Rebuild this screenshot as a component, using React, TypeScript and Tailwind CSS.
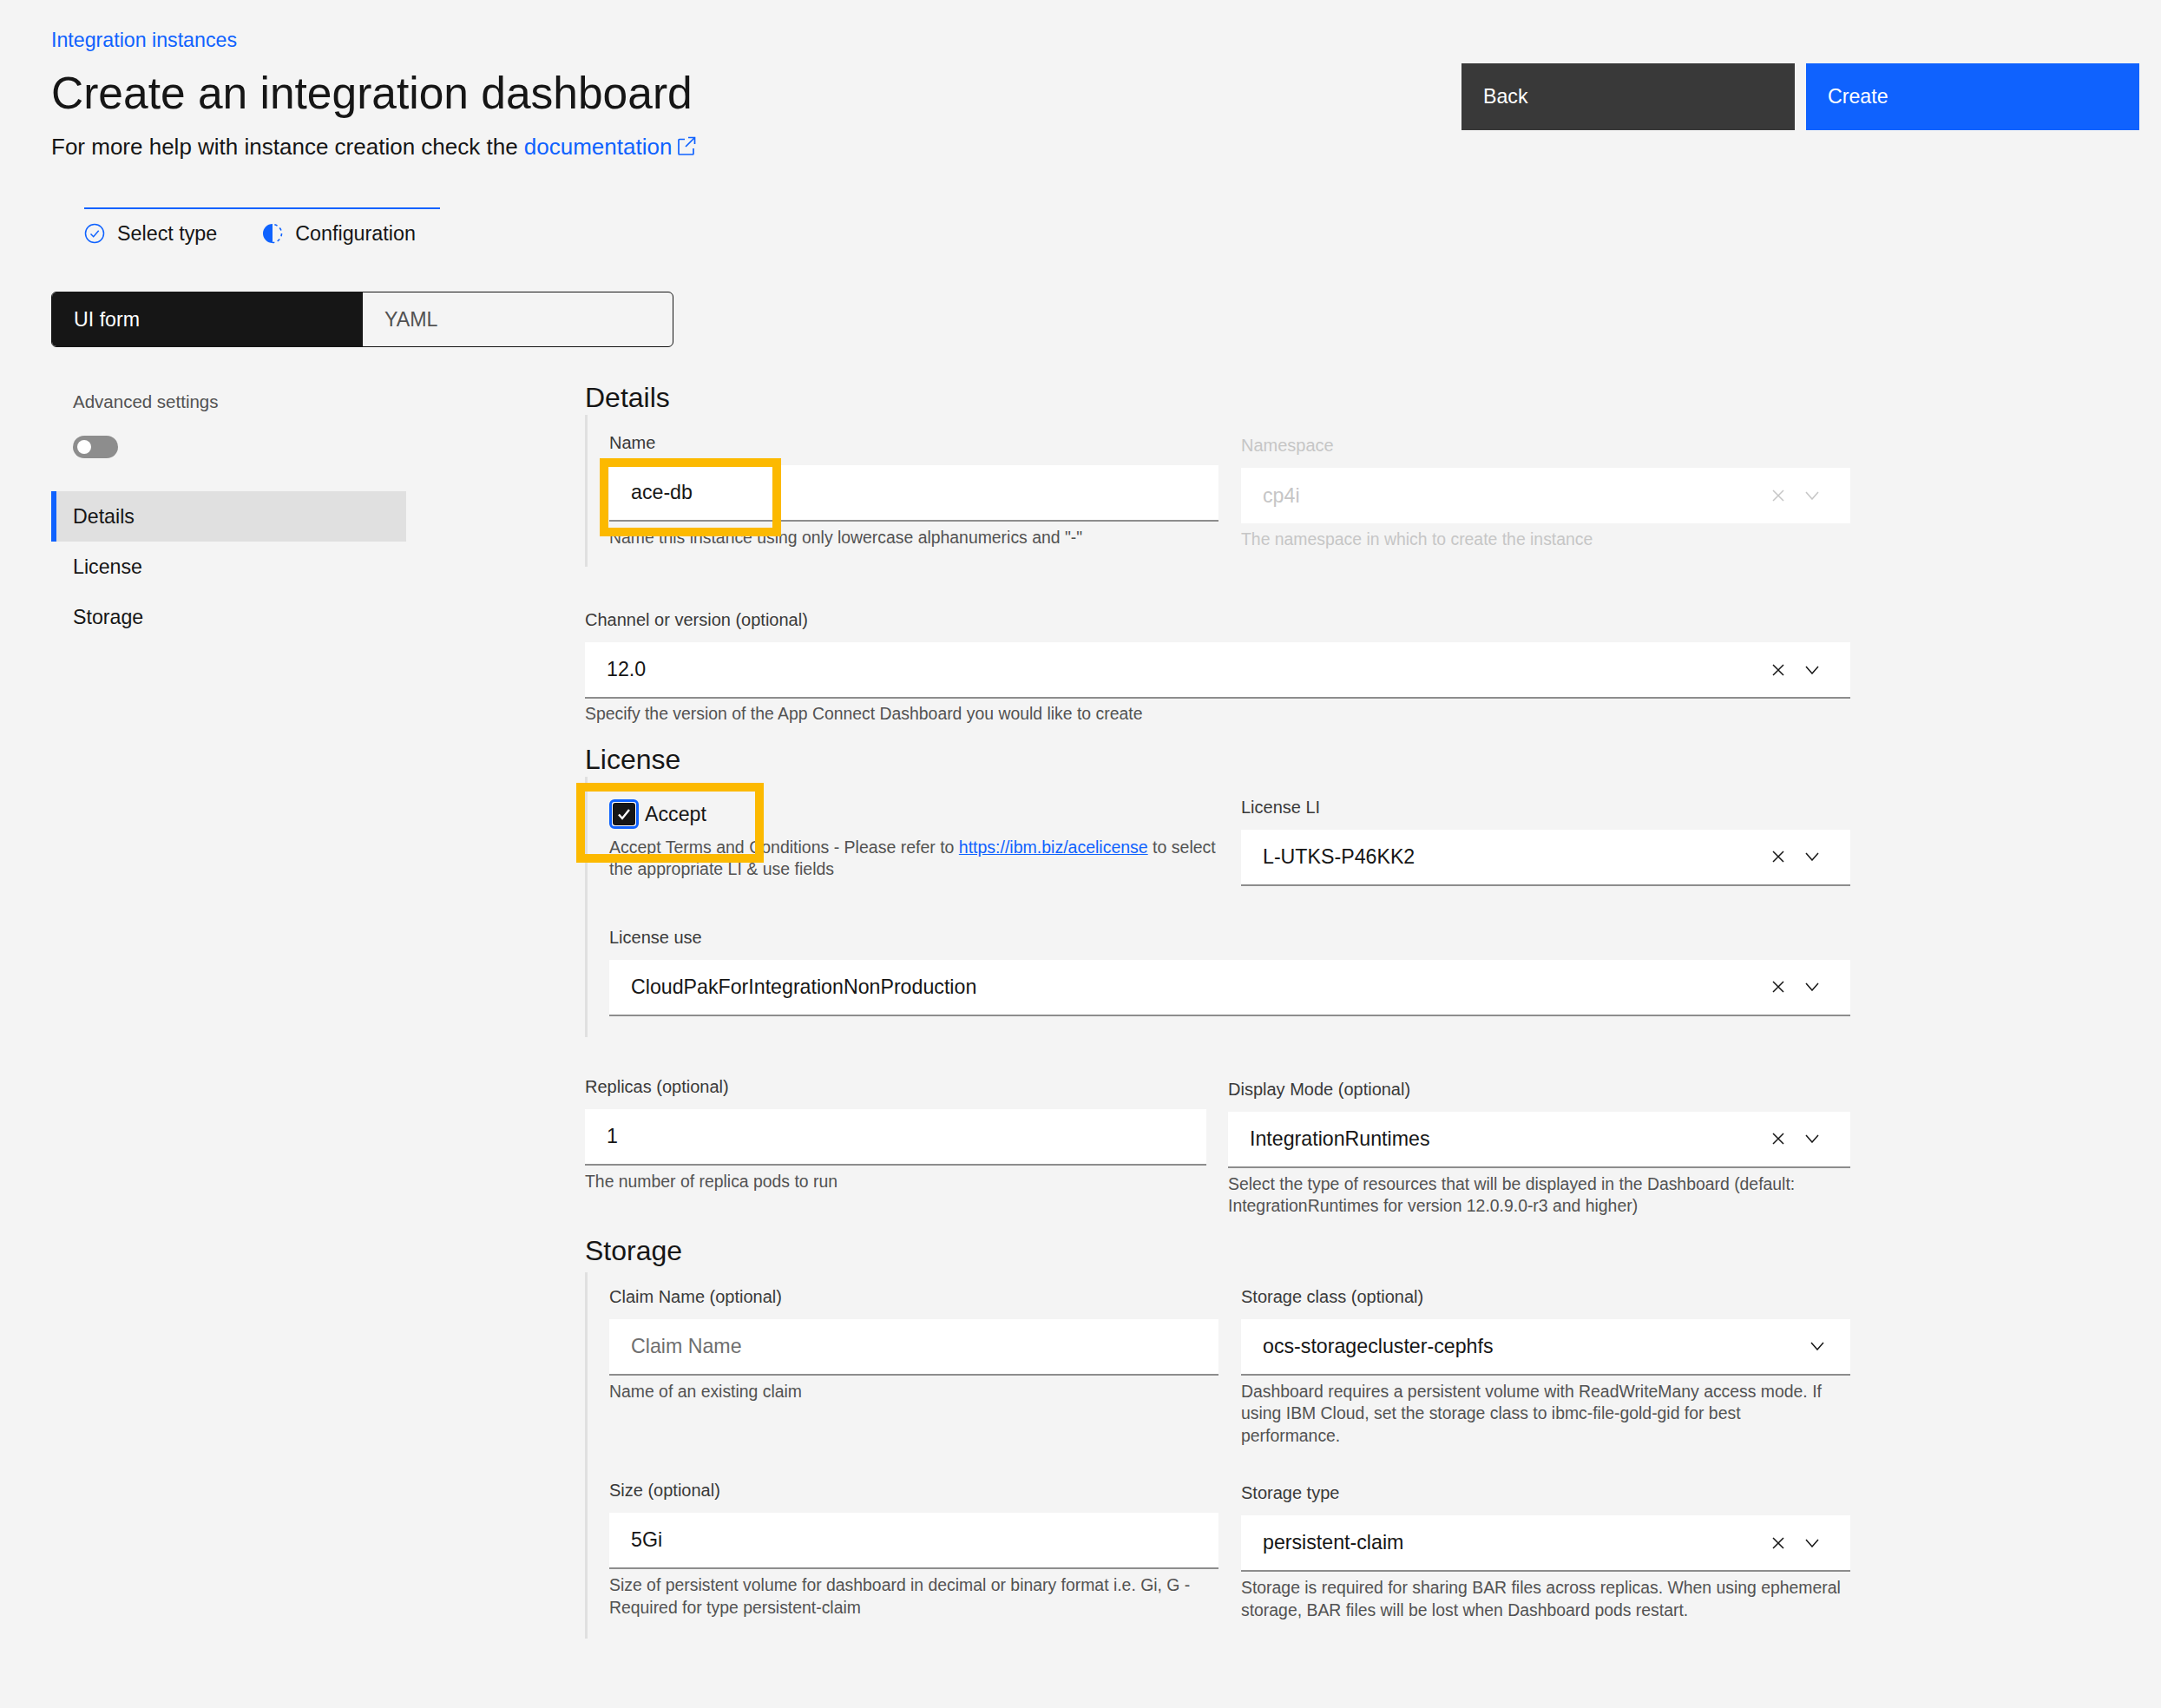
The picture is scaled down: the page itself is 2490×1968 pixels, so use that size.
import type { ReactNode } from "react";

const linkBlue = "text-[#0f62fe]";

function CloseIcon({ muted }: { muted?: boolean }) {
  return (
    <svg width="14" height="14" viewBox="0 0 14 14" fill="none" stroke={muted ? "#c6c6c6" : "#161616"} strokeWidth="1.5">
      <path d="M1 1l12 12M13 1L1 13" />
    </svg>
  );
}

function ChevronIcon({ muted }: { muted?: boolean }) {
  return (
    <svg width="16" height="10" viewBox="0 0 16 10" fill="none" stroke={muted ? "#c6c6c6" : "#161616"} strokeWidth="1.5">
      <path d="M1 1l7 8 7-8" />
    </svg>
  );
}

function Launch() {
  return (
    <svg width="22" height="22" viewBox="0 0 22 22" fill="none" stroke="#0f62fe" strokeWidth="1.7" className="ml-[6px] inline-block align-[-1px]">
      <path d="M9 3.5H3a1 1 0 0 0-1 1V20a1 1 0 0 0 1 1h15a1 1 0 0 0 1-1v-6M13 1.5h7.5V9M20.5 1.5L10 12" />
    </svg>
  );
}

function StepDone() {
  return (
    <svg width="24" height="24" viewBox="0 0 24 24" fill="none" stroke="#0f62fe" strokeWidth="1.5">
      <circle cx="12" cy="12" r="10.5" />
      <path d="M7.5 12.5l3.2 3.2 6-7" />
    </svg>
  );
}

function StepCurrent() {
  return (
    <svg width="24" height="24" viewBox="0 0 24 24" fill="none">
      <path d="M12 1a11 11 0 0 0 0 22z" fill="#0f62fe" />
      <path d="M12 1.5a10.5 10.5 0 0 1 0 21" stroke="#0f62fe" strokeWidth="1.6" strokeDasharray="3.4 3.6" strokeDashoffset="-2.4" />
    </svg>
  );
}

function Label({ children, muted }: { children: ReactNode; muted?: boolean }) {
  return (
    <div className={`h-[26px] mb-[13px] text-[20px] leading-[26px] ${muted ? "text-[#c6c6c6]" : "text-[#393939]"}`}>
      {children}
    </div>
  );
}

function Helper({ children, muted, className = "mt-[6px]" }: { children: ReactNode; muted?: boolean; className?: string }) {
  return (
    <div className={`${className} text-[19.4px] leading-[25.5px] ${muted ? "text-[#c6c6c6]" : "text-[#525252]"}`}>
      {children}
    </div>
  );
}

function Control({
  value,
  placeholder,
  select,
  noClear,
  disabled,
}: {
  value?: string;
  placeholder?: string;
  select?: boolean;
  noClear?: boolean;
  disabled?: boolean;
}) {
  const colour = disabled ? "text-[#c6c6c6]" : placeholder ? "text-[#6f6f6f]" : "text-[#161616]";
  return (
    <div
      className={`bg-white flex items-center pl-[25px] text-[23.2px] ${colour} ${noClear ? "pr-[30px]" : "pr-[36px]"} ${
        disabled ? "h-[64px]" : "h-[65px] border-b-2 border-[#8d8d8d]"
      }`}
    >
      <span className="flex-1">{value ?? placeholder}</span>
      {select && (
        <span className="flex items-center">
          {!noClear && <CloseIcon muted={disabled} />}
          <span className={noClear ? "" : "ml-[24px]"}>
            <ChevronIcon muted={disabled} />
          </span>
        </span>
      )}
    </div>
  );
}

function Heading({ children }: { children: ReactNode }) {
  return <h2 className="h-[40px] text-[32px] leading-[40px] text-[#161616]">{children}</h2>;
}

function Group({ children, className }: { children: ReactNode; className: string }) {
  return <div className={`border-l-[3px] border-[#e0e0e0] pl-[25px] ${className}`}>{children}</div>;
}

function Highlight({ className }: { className: string }) {
  return <div className={`absolute border-[10px] border-[#fcb900] pointer-events-none ${className}`} />;
}

export default function App() {
  return (
    <div className="min-h-[1968px] bg-[#f4f4f4] pl-[59px] pr-[25px] font-['Liberation_Sans',sans-serif] text-[#161616]">
      <div className="flex justify-between">
        <div>
          <a className={`block pt-[33px] h-[72px] text-[23.2px] leading-[26px] ${linkBlue}`}>Integration instances</a>
          <h1 className="mt-[5px] text-[51.5px] leading-[60px] text-[#161616]">Create an integration dashboard</h1>
          <p className="mt-[17px] mb-[1px] text-[26px] leading-[30px]">
            For more help with instance creation check the <a className={linkBlue}>documentation</a>
            <Launch />
          </p>
        </div>
        <div className="flex gap-[13px] pt-[73px]">
          <button className="w-[384px] h-[77px] bg-[#393939] text-white text-[23.2px] text-left pl-[25px]">Back</button>
          <button className="w-[384px] h-[77px] bg-[#0f62fe] text-white text-[23.2px] text-left pl-[25px]">Create</button>
        </div>
      </div>

      <div className="ml-[38px] mt-[54px] w-[410px] border-t-2 border-[#0f62fe] pt-[15px] flex items-center text-[23.3px] leading-[26px]">
        <StepDone />
        <span className="ml-[14px]">Select type</span>
        <span className="ml-[52px]">
          <StepCurrent />
        </span>
        <span className="ml-[14px]">Configuration</span>
      </div>

      <div className="mt-[54px] w-[717px] h-[64px] flex rounded-[6px] overflow-hidden border border-[#161616] text-[23.2px]">
        <div className="w-[358px] bg-[#161616] text-white flex items-center pl-[25px]">UI form</div>
        <div className="flex-1 text-[#525252] flex items-center pl-[25px]">YAML</div>
      </div>

      <div className="flex">
        <aside className="w-[615px] pt-[50px]">
          <div className="pl-[25px] text-[20.5px] leading-[26px] text-[#525252]">Advanced settings</div>
          <div className="ml-[25px] mt-[26px] w-[52px] h-[26px] rounded-full bg-[#8d8d8d] flex items-center pl-[5px]">
            <div className="w-[16px] h-[16px] rounded-full bg-white" />
          </div>
          <nav className="mt-[38px] text-[23.2px]">
            <div className="w-[409px] h-[58px] bg-[#e0e0e0] border-l-[6px] border-[#0f62fe] pl-[19px] flex items-center">Details</div>
            <div className="h-[58px] pl-[25px] flex items-center">License</div>
            <div className="h-[58px] pl-[25px] flex items-center">Storage</div>
          </nav>
        </aside>

        <main className="w-[1458px] pt-[38px]">
          <Heading>Details</Heading>
          <Group className="h-[175px] pt-[19px] grid grid-cols-[702px_702px] gap-x-[26px]">
            <div className="relative">
              <Label>Name</Label>
              <Control value="ace-db" />
              <Helper>Name this instance using only lowercase alphanumerics and "-"</Helper>
              <Highlight className="left-[-11px] top-[31px] w-[209px] h-[90px]" />
            </div>
            <div className="pt-[3px]">
              <Label muted>Namespace</Label>
              <Control value="cp4i" select disabled />
              <Helper muted>The namespace in which to create the instance</Helper>
            </div>
          </Group>

          <div className="mt-[48px]">
            <Label>Channel or version (optional)</Label>
            <Control value="12.0" select />
            <Helper className="mt-[5px]">Specify the version of the App Connect Dashboard you would like to create</Helper>
          </div>

          <div className="mt-[19px]">
            <Heading>License</Heading>
          </div>
          <Group className="h-[300px] pt-[22px]">
            <div className="grid grid-cols-[702px_702px] gap-x-[26px]">
              <div className="relative">
                <div className="mt-[4px] flex items-center h-[34px]">
                  <div className="w-[34px] h-[34px] rounded-[6px] border-[3px] border-[#0f62fe] p-[1px] bg-white">
                    <div className="w-full h-full rounded-[3px] bg-[#161616] flex items-center justify-center">
                      <svg width="16" height="14" viewBox="0 0 16 14" fill="none" stroke="white" strokeWidth="2.4">
                        <path d="M2 7.5l4 4.5 8-10" />
                      </svg>
                    </div>
                  </div>
                  <span className="ml-[7px] pt-[2px] text-[23.2px]">Accept</span>
                </div>
                <div className="mt-[9px] text-[19.5px] leading-[25.5px] text-[#525252]">
                  Accept Terms and Conditions - Please refer to{" "}
                  <a className={`underline ${linkBlue}`}>https://ibm.biz/acelicense</a> to select the appropriate LI &amp; use fields
                </div>
                <Highlight className="left-[-38px] top-[-15px] w-[216px] h-[92px]" />
              </div>
              <div>
                <Label>License LI</Label>
                <Control value="L-UTKS-P46KK2" select />
              </div>
            </div>
            <div className="mt-[46px]">
              <Label>License use</Label>
              <Control value="CloudPakForIntegrationNonProduction" select />
            </div>
          </Group>

          <div className="mt-[44px] grid grid-cols-[716px_717px] gap-x-[25px]">
            <div>
              <Label>Replicas (optional)</Label>
              <Control value="1" />
              <Helper>The number of replica pods to run</Helper>
            </div>
            <div className="pt-[3px]">
              <Label>Display Mode (optional)</Label>
              <Control value="IntegrationRuntimes" select />
              <Helper>
                Select the type of resources that will be displayed in the Dashboard (default: IntegrationRuntimes for version 12.0.9.0-r3 and higher)
              </Helper>
            </div>
          </div>

          <div className="mt-[18px]">
            <Heading>Storage</Heading>
          </div>
          <Group className="mt-[5px] h-[422px] pt-[15px] flex gap-x-[26px]">
            <div className="w-[702px]">
              <Label>Claim Name (optional)</Label>
              <Control placeholder="Claim Name" />
              <Helper>Name of an existing claim</Helper>
              <div className="mt-[88px]">
                <Label>Size (optional)</Label>
                <Control value="5Gi" />
                <Helper>
                  Size of persistent volume for dashboard in decimal or binary format i.e. Gi, G - Required for type persistent-claim
                </Helper>
              </div>
            </div>
            <div className="w-[702px]">
              <Label>Storage class (optional)</Label>
              <Control value="ocs-storagecluster-cephfs" select noClear />
              <Helper>
                Dashboard requires a persistent volume with ReadWriteMany access mode. If using IBM Cloud, set the storage class to ibmc-file-gold-gid for best
                <br />
                performance.
              </Helper>
              <div className="mt-[40px]">
                <Label>Storage type</Label>
                <Control value="persistent-claim" select />
                <Helper>
                  Storage is required for sharing BAR files across replicas. When using ephemeral storage, BAR files will be lost when Dashboard pods restart.
                </Helper>
              </div>
            </div>
          </Group>
        </main>
      </div>
    </div>
  );
}
